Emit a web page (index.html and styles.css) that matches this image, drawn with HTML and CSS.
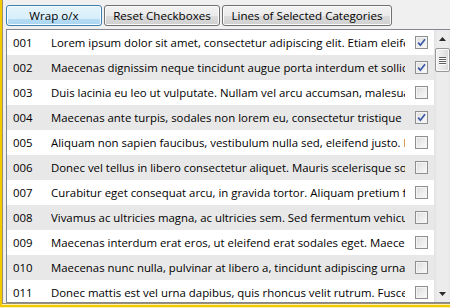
FILE: index.html
```html
<!DOCTYPE html>
<html>
<head>
<meta charset="utf-8">
<link rel="stylesheet" href="styles.css">
</head>
<body>
<div class="window">
  <div class="client">
    <div class="toolbar">
      <button class="btn hot w1">Wrap o/x</button>
      <button class="btn w2">Reset Checkboxes</button>
      <button class="btn w3">Lines of Selected Categories</button>
    </div>
    <div class="list">
      <div class="rows">
        <div class="row"><span class="num">001</span><span class="txt">Lorem ipsum dolor sit amet, consectetur adipiscing elit. Etiam eleifend</span><span class="cbcell"><span class="cb on"><svg viewBox="0 0 9 9" width="9" height="9"><path d="M1.2 4.6 L3.4 7.2 L8 1.2" fill="none" stroke="#3a57a6" stroke-width="1.7"/></svg></span></span></div>
        <div class="row alt"><span class="num">002</span><span class="txt">Maecenas dignissim neque tincidunt augue porta interdum et sollicitudin</span><span class="cbcell"><span class="cb on"><svg viewBox="0 0 9 9" width="9" height="9"><path d="M1.2 4.6 L3.4 7.2 L8 1.2" fill="none" stroke="#3a57a6" stroke-width="1.7"/></svg></span></span></div>
        <div class="row"><span class="num">003</span><span class="txt">Duis lacinia eu leo ut vulputate. Nullam vel arcu accumsan, malesuada</span><span class="cbcell"><span class="cb"></span></span></div>
        <div class="row alt"><span class="num">004</span><span class="txt">Maecenas ante turpis, sodales non lorem eu, consectetur tristique augue</span><span class="cbcell"><span class="cb on"><svg viewBox="0 0 9 9" width="9" height="9"><path d="M1.2 4.6 L3.4 7.2 L8 1.2" fill="none" stroke="#3a57a6" stroke-width="1.7"/></svg></span></span></div>
        <div class="row"><span class="num">005</span><span class="txt">Aliquam non sapien faucibus, vestibulum nulla sed, eleifend justo. Nulla</span><span class="cbcell"><span class="cb"></span></span></div>
        <div class="row alt"><span class="num">006</span><span class="txt">Donec vel tellus in libero consectetur aliquet. Mauris scelerisque sodales</span><span class="cbcell"><span class="cb"></span></span></div>
        <div class="row"><span class="num">007</span><span class="txt">Curabitur eget consequat arcu, in gravida tortor. Aliquam pretium fermentum</span><span class="cbcell"><span class="cb"></span></span></div>
        <div class="row alt"><span class="num">008</span><span class="txt">Vivamus ac ultricies magna, ac ultricies sem. Sed fermentum vehicula</span><span class="cbcell"><span class="cb"></span></span></div>
        <div class="row"><span class="num">009</span><span class="txt">Maecenas interdum erat eros, ut eleifend erat sodales eget. Maecenas</span><span class="cbcell"><span class="cb"></span></span></div>
        <div class="row alt"><span class="num">010</span><span class="txt">Maecenas nunc nulla, pulvinar at libero a, tincidunt adipiscing urna.</span><span class="cbcell"><span class="cb"></span></span></div>
        <div class="row"><span class="num">011</span><span class="txt">Donec mattis est vel urna dapibus, quis rhoncus velit rutrum. Fusce sed</span><span class="cbcell"><span class="cb"></span></span></div>
      </div>
      <div class="scrollbar">
        <div class="arrow"><svg viewBox="0 0 7 4" width="7" height="4"><path d="M0 4 L3.5 0 L7 4 Z" fill="#2b2b2b"/></svg></div>
        <div class="track">
          <div class="thumb"><span class="grip"></span><span class="grip"></span><span class="grip"></span><span class="grip"></span></div>
        </div>
        <div class="arrow"><svg viewBox="0 0 7 4" width="7" height="4"><path d="M0 0 L7 0 L3.5 4 Z" fill="#2b2b2b"/></svg></div>
      </div>
    </div>
  </div>
</div>
</body>
</html>
```
FILE: styles.css
```css
html, body {
  margin: 0;
  padding: 0;
}
body {
  width: 450px;
  height: 308px;
  overflow: hidden;
  background: #fbf1b0;
  font-family: "Open Sans", "Segoe UI", sans-serif;
  font-size: 11.4px;
  color: #000;
}
.window {
  height: 305px;
  border-left: 2px solid #f3c900;
  border-bottom: 2px solid #f3c900;
}
.client {
  height: 304px;
  border-left: 1px solid #9c9070;
  border-bottom: 1px solid #9c9070;
  background: #f0f0f0;
  padding: 5px 0 0 3px;
  box-sizing: border-box;
  display: flex;
  flex-direction: column;
  gap: 3px;
}
.toolbar {
  display: flex;
  gap: 2px;
  height: 21px;
}
.btn {
  height: 21px;
  padding: 0;
  margin: 0;
  font: inherit;
  font-size: 11.6px;
  color: #000;
  border: 1px solid #707070;
  border-radius: 3px;
  background: linear-gradient(#f2f2f2 0%, #ebebeb 50%, #dddddd 51%, #cfcfcf 100%);
  box-shadow: inset 0 0 0 1px #fbfbfb;
}
.btn.hot {
  border-color: #3c7fb1;
  background: linear-gradient(#e5f4fc 0%, #d6eefb 70%, #b6dcf4 71%, #a9d4f1 100%);
  box-shadow: inset 0 0 0 1px #f6fbfe;
}
.w1 { width: 96px; }
.w2 { width: 116px; }
.w3 { width: 170px; }
.list {
  width: 446px;
  height: 274px;
  box-sizing: border-box;
  border: 1px solid #828790;
  background: #fff;
  display: flex;
}
.rows {
  flex: 1;
  display: flex;
  flex-direction: column;
  overflow: hidden;
}
.row {
  display: flex;
  align-items: center;
  height: 25px;
  flex: none;
  background: #fff;
}
.row.alt {
  background: #e8e8e8;
}
.num {
  width: 44px;
  padding-left: 6px;
  box-sizing: border-box;
  flex: none;
}
.txt {
  width: 354px;
  flex: none;
  white-space: nowrap;
  overflow: hidden;
}
.cbcell {
  flex: 1;
  display: flex;
  align-items: center;
  padding-left: 10px;
}
.cb {
  width: 13px;
  height: 13px;
  box-sizing: border-box;
  border: 1px solid #8e8f8f;
  background: linear-gradient(135deg, #dcdcdc, #fbfbfb);
  box-shadow: inset 0 0 0 1px #f4f4f4;
  display: flex;
  align-items: center;
  justify-content: center;
}
.cb svg {
  display: block;
}
.scrollbar {
  width: 17px;
  flex: none;
  display: flex;
  flex-direction: column;
  background: linear-gradient(to right, #e2e2e2, #ececec 20%, #ececec 80%, #e4e4e4);
}
.arrow {
  height: 17px;
  flex: none;
  display: flex;
  align-items: center;
  justify-content: center;
}
.arrow svg { display: block; }
.track {
  flex: 1;
  padding: 1px 0 0 1px;
}
.thumb {
  width: 15px;
  height: 24px;
  box-sizing: border-box;
  border: 1px solid #979797;
  border-radius: 2px;
  background: linear-gradient(to right, #f3f3f3, #e8e8e8 50%, #d9d9d9);
  box-shadow: inset 0 0 0 1px #fafafa;
  display: flex;
  flex-direction: column;
  align-items: center;
  justify-content: center;
  gap: 1px;
}
.grip {
  width: 7px;
  height: 1px;
  background: #5f5f5f;
  box-shadow: 0 1px 0 #fcfcfc;
}
```
